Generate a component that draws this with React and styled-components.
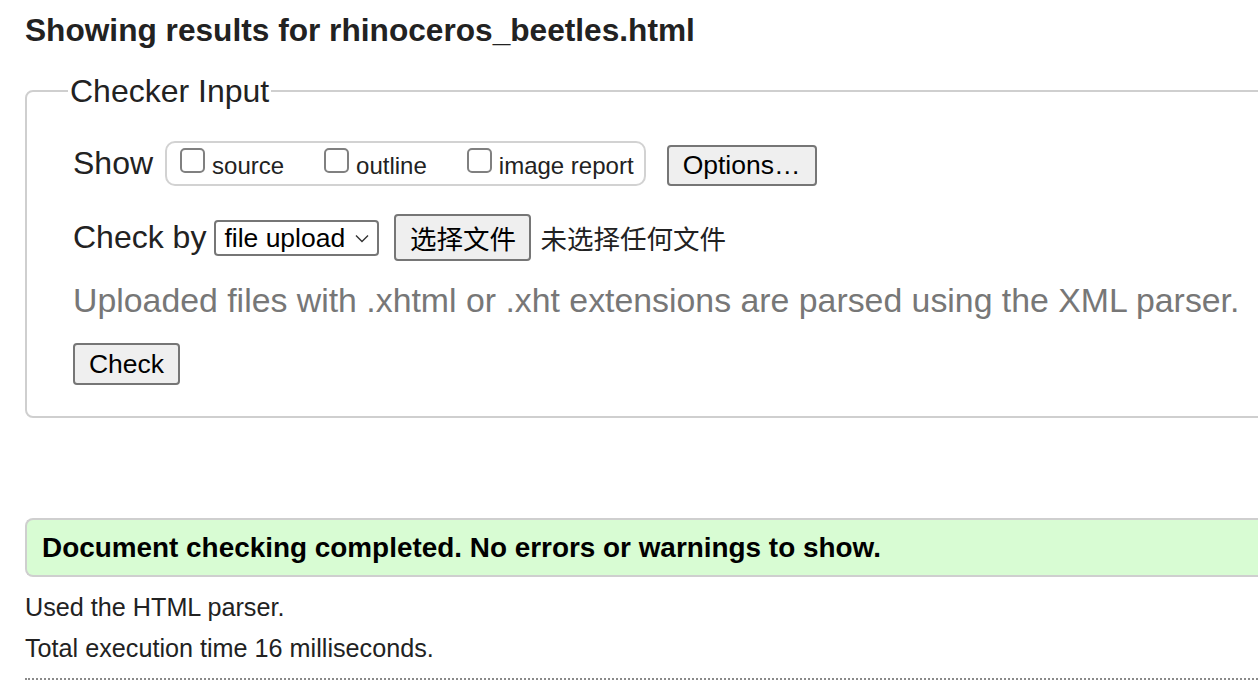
import React from 'react';
import styled, { createGlobalStyle } from 'styled-components';

const GlobalStyle = createGlobalStyle`
	html, body {
		margin: 0;
		padding: 0;
		background: #fff;
		overflow: hidden;
	}
	body {
		font-family: "Liberation Sans", Arial, "Noto Sans CJK SC", sans-serif;
		color: #222;
	}
`;

const Page = styled.main`
	padding: 12px 0 0 25px;
	width: 1300px;
`;

const Title = styled.h2`
	margin: 0;
	font-size: 31.65px;
	line-height: 36px;
	font-weight: 700;
	color: #222;
`;

const Fieldset = styled.fieldset`
	margin: 25px 0 0 0;
	width: 1300px;
	box-sizing: border-box;
	border: 2px solid #cfcfcf;
	border-radius: 8px;
	padding: 30px 0 31px 46px;
	min-inline-size: 0;
`;

const Legend = styled.legend`
	font-size: 32px;
	line-height: 36px;
	padding: 0 2px;
	margin-left: -5px;
	color: #222;
`;

const Row = styled.div`
	display: flex;
	align-items: center;
	height: ${(p) => p.$h || 48}px;
	margin-top: ${(p) => p.$mt || 0}px;
`;

const Label = styled.span`
	font-size: 32px;
	color: #222;
`;

const CheckGroup = styled.div`
	display: flex;
	align-items: center;
	box-sizing: border-box;
	height: 45px;
	margin-left: 12px;
	padding: 0 10px 0 13px;
	border: 2px solid #d2d2d2;
	border-radius: 10px;
`;

const CheckItem = styled.label`
	display: flex;
	align-items: center;
	gap: 7px;
	font-size: 24px;
	color: #222;
	margin-left: ${(p) => (p.$first ? 0 : 40)}px;
	transform: translateY(3px);

	span.box {
		box-sizing: border-box;
		width: 25px;
		height: 25px;
		border: 2px solid #808080;
		border-radius: 5px;
		background: #fff;
		transform: translateY(-6px);
	}
`;

const Button = styled.button`
	box-sizing: border-box;
	width: ${(p) => p.$w}px;
	height: ${(p) => p.$h}px;
	margin-left: ${(p) => p.$ml || 0}px;
	margin-top: ${(p) => p.$mt || 0}px;
	padding: 0;
	background: #efefef;
	border: 2px solid #767676;
	border-radius: 4px;
	font-family: "Liberation Sans", Arial, "Noto Sans CJK SC", sans-serif;
	font-size: 26.5px;
	color: #000;
	display: flex;
	align-items: center;
	justify-content: center;
`;

const SelectBox = styled.div`
	box-sizing: border-box;
	display: flex;
	align-items: center;
	justify-content: space-between;
	width: 165px;
	height: 36px;
	margin-left: 8px;
	margin-top: 2px;
	padding: 0 8px 0 8px;
	border: 2px solid #767676;
	border-radius: 4px;
	background: #fff;
	font-size: 26.5px;
	color: #000;
`;

const FileName = styled.span`
	margin-left: 9px;
	font-size: 26.5px;
	color: #222;
`;

const Hint = styled.p`
	margin: 0;
	font-size: 33.85px;
	line-height: 40px;
	color: #777;
	white-space: nowrap;
`;

const Success = styled.div`
	box-sizing: border-box;
	display: flex;
	align-items: center;
	width: 1300px;
	height: 59px;
	margin-top: 100px;
	padding-left: 15px;
	background: #d8fcd3;
	border: 2px solid #cfcfcf;
	border-right: none;
	border-radius: 8px 0 0 8px;
	font-size: 27.9px;
	font-weight: 700;
	color: #000;
`;

const Note = styled.p`
	margin: ${(p) => p.$mt}px 0 0 0;
	font-size: 25.2px;
	line-height: 30px;
	color: #222;
`;

const Dotted = styled.hr`
	margin: 15px 0 0 0;
	width: 1300px;
	border: none;
	border-top: 2px dotted #8a8a8a;
	height: 0;
`;

const Chevron = () => (
	<svg width='14' height='9' viewBox='0 0 14 9' fill='none'>
		<path d='M1 1.5 L7 7.5 L13 1.5' stroke='#333' strokeWidth='1.4' />
	</svg>
);

const App = () => {
	return (
		<Page>
			<GlobalStyle />
			<Title>Showing results for rhinoceros_beetles.html</Title>

			<Fieldset>
				<Legend>Checker Input</Legend>

				<Row>
					<Label>Show</Label>
					<CheckGroup>
						<CheckItem $first>
							<span className='box' />
							source
						</CheckItem>
						<CheckItem>
							<span className='box' />
							outline
						</CheckItem>
						<CheckItem>
							<span className='box' />
							image report
						</CheckItem>
					</CheckGroup>
					<Button $w={150} $h={41} $ml={21} $mt={5}>
						Options…
					</Button>
				</Row>

				<Row $mt={26}>
					<Label>Check by</Label>
					<SelectBox>
						<span>file upload</span>
						<Chevron />
					</SelectBox>
					<Button $w={137} $h={47} $ml={15}>
						选择文件
					</Button>
					<FileName>未选择任何文件</FileName>
				</Row>

				<Row $mt={19} $h={40}>
					<Hint>
						Uploaded files with .xhtml or .xht extensions are parsed using the XML parser.
					</Hint>
				</Row>

				<Row $mt={23} $h={42}>
					<Button $w={107} $h={42}>
						Check
					</Button>
				</Row>
			</Fieldset>

			<Success>Document checking completed. No errors or warnings to show.</Success>

			<Note $mt={15}>Used the HTML parser.</Note>
			<Note $mt={11}>Total execution time 16 milliseconds.</Note>
			<Dotted />
		</Page>
	);
};

export default App;
